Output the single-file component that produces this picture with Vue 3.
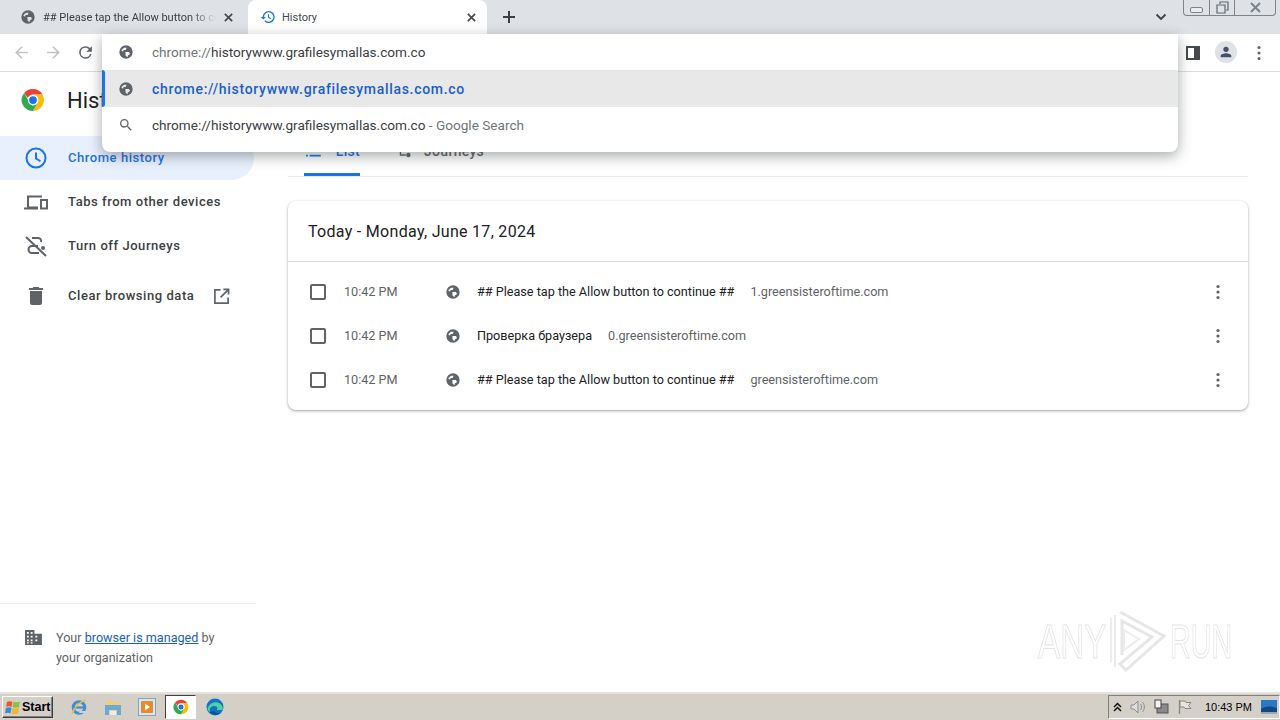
<template>
  <div class="screen">
    <div class="browser">
      <!-- tab strip -->
      <div class="tabstrip">
        <div class="tab">
          <svg class="tab-icon" viewBox="0 0 24 24"><path fill="#5f6368" fill-rule="evenodd" :d="globe" /></svg>
          <span class="tab-title fade">## Please tap the Allow button to continue ##</span>
          <svg class="tab-close" viewBox="0 0 12 12"><path d="M2 2l8 8M10 2l-8 8" stroke="#45484c" stroke-width="1.8" fill="none" /></svg>
        </div>
        <div class="tab tab-active">
          <svg class="tab-icon" viewBox="0 0 24 24"><path fill="#1a73e8" d="M13 3a9 9 0 0 0-9 9H1l3.900 3.900L9 12H6a7 7 0 1 1 2.050 4.950L6.640 18.360A9 9 0 1 0 13 3zm-1 5v5l4.250 2.520.770-1.280-3.520-2.090V8z" /></svg>
          <span class="tab-title">History</span>
          <svg class="tab-close" viewBox="0 0 12 12"><path d="M2 2l8 8M10 2l-8 8" stroke="#45484c" stroke-width="1.8" fill="none" /></svg>
        </div>
        <svg class="new-tab" viewBox="0 0 14 14"><path d="M7 1v12M1 7h12" stroke="#3c4043" stroke-width="2" fill="none" /></svg>
        <svg class="tab-search" viewBox="0 0 12 8"><path d="M1.500 1.500L6 6l4.500-4.500" stroke="#3c4043" stroke-width="1.8" fill="none" /></svg>
        <div class="window-controls">
          <div class="wc wc-min"><span></span></div>
          <div class="wc wc-max">
            <svg viewBox="0 0 13 13" width="13" height="13"><path d="M4 3V1h8v8h-2M1 4h8v8H1z" fill="none" stroke="#5c6670" stroke-width="1.2" /></svg>
          </div>
          <div class="wc wc-close">
            <svg viewBox="0 0 13 11" width="13" height="11"><path d="M2 1l9 9M11 1l-9 9" fill="none" stroke="#7a838c" stroke-width="2" /></svg>
          </div>
        </div>
      </div>

      <!-- toolbar -->
      <div class="toolbar">
        <svg class="tb-icon" viewBox="0 0 24 24"><path fill="#bfc2c6" d="M20 11H7.830l5.590-5.590L12 4l-8 8 8 8 1.410-1.410L7.830 13H20z" /></svg>
        <svg class="tb-icon" viewBox="0 0 24 24"><path fill="#bfc2c6" d="M4 11h12.170l-5.590-5.590L12 4l8 8-8 8-1.410-1.410L16.170 13H4z" /></svg>
        <svg class="tb-icon" viewBox="0 0 24 24"><path fill="#5f6368" d="M17.650 6.350A7.960 7.960 0 0 0 12 4a8 8 0 1 0 7.730 10h-2.080A6 6 0 1 1 12 6c1.660 0 3.140.690 4.220 1.780L13 11h7V4z" /></svg>
        <div class="tb-spacer"></div>
        <svg class="side-panel" viewBox="0 0 14 14"><path fill="#45484c" fill-rule="evenodd" d="M0 0h14v14H0zM2 2v10h6V2z" /></svg>
        <div class="avatar">
          <svg viewBox="0 0 24 24" width="16" height="16"><path fill="#45506b" d="M12 12a4 4 0 1 0 0-8 4 4 0 0 0 0 8zm0 2c-3 0-8 1.400-8 4v2h16v-2c0-2.600-5-4-8-4z" /></svg>
        </div>
        <svg class="dots" viewBox="0 0 4 16"><circle cx="2" cy="2.500" r="1.500" /><circle cx="2" cy="8" r="1.500" /><circle cx="2" cy="13.500" r="1.500" /></svg>
      </div>

      <!-- history page -->
      <div class="page">
        <aside class="sidebar">
          <div class="brand">
            <svg width="24" height="24" viewBox="0 0 48 48">
              <path fill="#ea4335" d="M24 2a22 22 0 0 1 19.050 11H24a11 11 0 0 0-10.300 7.100L6.300 9.900A22 22 0 0 1 24 2z" />
              <path fill="#fbbc04" d="M43.050 13A22 22 0 0 1 24 46l9.500-16.500A11 11 0 0 0 33.500 18.500 11 11 0 0 0 24 13z" />
              <path fill="#34a853" d="M6.300 9.900l9.500 16.600A10 10 0 0 0 24 35a11 11 0 0 0 9.500-5.500L24 46A22 22 0 0 1 6.300 9.900z" />
              <circle cx="24" cy="24" r="9" fill="#1a73e8" stroke="#fff" stroke-width="2.500" />
            </svg>
            <span class="brand-title">History</span>
          </div>
          <nav class="nav">
            <div class="nav-item active">
              <svg class="nav-icon" viewBox="0 0 24 24"><path fill="#1a73e8" d="M12 1.500a10.500 10.500 0 1 0 0 21 10.500 10.500 0 0 0 0-21zm0 2a8.500 8.500 0 1 1 0 17 8.500 8.500 0 0 1 0-17zM11 6.500V13l5 3 1-1.600-4-2.400V6.500z" /></svg>
              <span>Chrome history</span>
            </div>
            <div class="nav-item">
              <svg class="nav-icon wide" viewBox="0 0 24 16"><path fill="#5f6368" d="M3 1.500h15v2H5v9h9v3H0v-2h3zM16 5h8v10.500h-8zm2 2v6.500h4V7z" /></svg>
              <span>Tabs from other devices</span>
            </div>
            <div class="nav-item">
              <svg class="nav-icon" viewBox="0 0 24 24"><path d="M2 3l20 19" stroke="#5f6368" stroke-width="2" fill="none" /><path d="M8 4h6a3 3 0 0 1 3 4M14 12H8a3.500 3.500 0 0 0 0 7h7" stroke="#5f6368" stroke-width="2" fill="none" /><circle cx="19" cy="14" r="2" fill="#5f6368" /></svg>
              <span>Turn off Journeys</span>
            </div>
            <div class="nav-item clear">
              <svg class="nav-icon" viewBox="0 0 24 24"><path fill="#5f6368" d="M6 19a2 2 0 0 0 2 2h8a2 2 0 0 0 2-2V7H6zM19 4h-3.500l-1-1h-5l-1 1H5v2h14z" /></svg>
              <span>Clear browsing data</span>
              <svg class="ext" viewBox="0 0 18 18"><path d="M8 2H2v14h14v-6M11 1.500h5.500V7M16 2L8 10" fill="none" stroke="#5f6368" stroke-width="1.800" /></svg>
            </div>
          </nav>
          <div class="managed">
            <svg class="managed-icon" viewBox="0 0 18 16"><path fill="#5f6368" fill-rule="evenodd" d="M0 0h10v4h8v12H0zm2 2v2h2V2zm4 0v2h2V2zM2 6v2h2V6zm4 0v2h2V6zM2 10v2h2v-2zm4 0v2h2v-2zm5-4v2h2V6zm0 4v2h2v-2zM2 13v1.500h2V13zm4 0v1.500h2V13z" /></svg>
            <p>Your <a>browser is managed</a> by your organization</p>
          </div>
        </aside>

        <main class="content">
          <div class="content-tabs">
            <div class="ctab ctab-active">
              <svg width="16" height="12" viewBox="0 0 16 12"><path d="M0 1h2M4 1h12M0 6h2M4 6h12M0 11h2M4 11h12" stroke="#1a73e8" stroke-width="1.800" /></svg>
              <span>List</span>
            </div>
            <div class="ctab">
              <svg width="14" height="13" viewBox="0 0 16 14"><circle cx="4" cy="4" r="3" fill="#5f6368" /><circle cx="13" cy="11" r="2.500" fill="#5f6368" /><path d="M4 7v4h6" stroke="#5f6368" stroke-width="1.600" fill="none" /></svg>
              <span>Journeys</span>
            </div>
          </div>
          <section class="card">
            <h2 class="card-title">Today - Monday, June 17, 2024</h2>
            <div class="rows">
              <div v-for="row in rows" :key="row.domain" class="row">
                <span class="check"></span>
                <span class="time">10:42 PM</span>
                <svg class="row-globe" viewBox="0 0 24 24"><path fill="#5f6368" fill-rule="evenodd" :d="globe" /></svg>
                <span class="row-title">{{ row.title }}</span>
                <span class="row-domain">{{ row.domain }}</span>
                <svg class="row-more" viewBox="0 0 4 16"><circle cx="2" cy="2.500" r="1.600" /><circle cx="2" cy="8" r="1.600" /><circle cx="2" cy="13.500" r="1.600" /></svg>
              </div>
            </div>
          </section>
          <div class="watermark">
            <span class="wm-any">ANY</span>
            <svg width="58" height="62" viewBox="0 0 58 62"><path d="M12 2l44 24-38 34-6-6 32-27L14 11v34" fill="none" stroke="#e6e6e6" stroke-width="3" /><path d="M3 8v44M7 5v52M16 20l15 9-15 11z" fill="none" stroke="#ececec" stroke-width="2" /></svg>
            <span class="wm-run">RUN</span>
          </div>
        </main>
      </div>

      <!-- omnibox dropdown -->
      <div class="omnibox">
        <div class="omni-row">
          <svg class="omni-icon" viewBox="0 0 24 24"><path fill="#5f6368" fill-rule="evenodd" :d="globe" /></svg>
          <span class="omni-text"><span class="dim">chrome://</span>historywww.grafilesymallas.com.co</span>
        </div>
        <div class="omni-row selected">
          <svg class="omni-icon" viewBox="0 0 24 24"><path fill="#5f6368" fill-rule="evenodd" :d="globe" /></svg>
          <span class="omni-text link">chrome://historywww.grafilesymallas.com.co</span>
        </div>
        <div class="omni-row last">
          <svg class="omni-icon" viewBox="0 0 24 24"><path fill="#5f6368" d="M15.500 14h-.790l-.280-.270A6.470 6.470 0 0 0 16 9.500 6.500 6.500 0 1 0 9.500 16c1.610 0 3.090-.590 4.230-1.570l.270.280v.790l5 4.990L20.490 19zm-6 0a4.500 4.500 0 1 1 0-9 4.500 4.500 0 0 1 0 9z" /></svg>
          <span class="omni-text">chrome://historywww.grafilesymallas.com.co <span class="dim">- Google Search</span></span>
        </div>
      </div>
    </div>

    <!-- windows taskbar -->
    <footer class="taskbar">
      <div class="start">
        <svg width="16" height="15" viewBox="0 0 16 15">
          <path fill="#e8562a" d="M2 2c2-1 4-1 5.500 0l-1 5C5 6 3 6 1 7z" />
          <path fill="#8cc04a" d="M8.500 1.500c2 1 4 1 6.500 0l-1 5.500c-2 1-4 1-6.500 0z" />
          <path fill="#3b88d8" d="M1 8c2-1 4-1 5.500 0l-1 5.500C4 12.500 2 12.500 0 13.500z" />
          <path fill="#f4b62c" d="M7.500 8c2 1 4 1 6.500 0l-1 5.500c-2 1-4 1-6.500 0z" />
        </svg>
        <span>Start</span>
      </div>
      <div class="task-icon">
        <svg width="18" height="18" viewBox="0 0 18 18"><circle cx="9" cy="9.500" r="5.800" fill="none" stroke="#3f8fd6" stroke-width="3" /><path d="M3 9.500h12" stroke="#3f8fd6" stroke-width="2.200" /><path d="M10 13h5.500v2H9z" fill="#d4d0c8" /><path d="M2 16c2-6 7-12 14-14" fill="none" stroke="#e9c04a" stroke-width="1.400" /></svg>
      </div>
      <div class="task-icon">
        <svg width="18" height="16" viewBox="0 0 18 16"><path fill="#e9cf7e" d="M2 1h6l1 2h7v4H2z" /><path fill="#6fa9d0" d="M1 6h16v10h-4v-5H5v5H1z" /><path fill="#fff" d="M6 12h6v4H6z" opacity=".6" /></svg>
      </div>
      <div class="task-icon">
        <svg width="18" height="18" viewBox="0 0 18 18"><rect x=".5" y=".5" width="17" height="17" fill="#d7e6f2" stroke="#7fa6c6" /><rect x="3" y="3" width="12" height="12" rx="1" fill="#ec8a22" /><path d="M7 5.500l5 3.500-5 3.500z" fill="#fff" /></svg>
      </div>
      <div class="task-icon pressed">
        <svg width="16" height="16" viewBox="0 0 48 48">
          <path fill="#ea4335" d="M24 2a22 22 0 0 1 19.050 11H24a11 11 0 0 0-10.300 7.100L6.300 9.900A22 22 0 0 1 24 2z" />
          <path fill="#fbbc04" d="M43.050 13A22 22 0 0 1 24 46l9.500-16.500A11 11 0 0 0 33.500 18.500 11 11 0 0 0 24 13z" />
          <path fill="#34a853" d="M6.300 9.900l9.500 16.600A10 10 0 0 0 24 35a11 11 0 0 0 9.500-5.500L24 46A22 22 0 0 1 6.300 9.900z" />
          <circle cx="24" cy="24" r="9" fill="#1a73e8" stroke="#fff" stroke-width="2.500" />
        </svg>
      </div>
      <div class="task-icon">
        <svg width="18" height="18" viewBox="0 0 18 18"><circle cx="9" cy="9" r="8.500" fill="#1273c4" /><path d="M1.500 11C3 5 9 3 13 5c3 1.500 4.500 4.500 3.500 7h-6c2-1 1-4-2-4C5 8 3 10 4 14c-1.300-.6-2-1.700-2.500-3z" fill="#4fd1a5" /><path d="M4 14c2 3 7 4 11 1-3 .5-6 0-7-2z" fill="#0d4f8f" /></svg>
      </div>
      <div class="task-spacer"></div>
      <div class="tray">
        <svg width="9" height="10" viewBox="0 0 9 10"><path d="M1 5l3.500-3.500L8 5M1 9l3.500-3.500L8 9" fill="none" stroke="#111" stroke-width="1.500" /></svg>
        <svg class="tray-speaker" width="16" height="16" viewBox="0 0 16 16"><path d="M1 6h3l4-4v12l-4-4H1z" fill="#dcdcdc" stroke="#8d8d8d" /><path d="M10.500 5c1.500 2 1.500 4 0 6M12.500 3c2.500 3 2.500 7 0 10" fill="none" stroke="#8d8d8d" /></svg>
        <svg class="tray-gap" width="16" height="16" viewBox="0 0 16 16"><rect x="3" y="5" width="11" height="9" fill="#8a8a8a" stroke="#555" /><rect x="1" y="1" width="6" height="8" fill="#f2f2f2" stroke="#444" /></svg>
        <svg class="tray-gap flag" width="16" height="16" viewBox="0 0 16 16"><path d="M2.500 1v14" stroke="#888" stroke-width="1.400" /><path d="M3 2h5l1 1.500h5l-2.500 3 2.500 3H8L7 8H3z" fill="#e6e3da" stroke="#888" /></svg>
        <span class="clock">10:43 PM</span>
        <svg class="desktop" width="16" height="14" viewBox="0 0 16 14"><rect width="16" height="14" fill="#2878c4" /><path d="M0 9c5-3 10-3 16-1v6H0z" fill="#14487e" /><rect y="12" width="16" height="2" fill="#9aa7b2" /></svg>
      </div>
    </footer>
  </div>
</template>

<script setup>
// globe favicon shared by tabs, rows and the omnibox
const globe = 'M12 2a10 10 0 1 0 0 20 10 10 0 0 0 0-20zM4.800 9.500L9 5.500h4l-1.500 3.500H8.500l-1 2.500zM11 12h5.500l1.500 3-3.500 2.500V20l-3-2.500z'

const rows = [
  { title: '## Please tap the Allow button to continue ##', domain: '1.greensisteroftime.com' },
  { title: 'Проверка браузера', domain: '0.greensisteroftime.com' },
  { title: '## Please tap the Allow button to continue ##', domain: 'greensisteroftime.com' }
]
</script>

<style>
html, body { margin: 0; background: #fff; overflow: hidden; }
</style>

<style scoped>
.screen { width: 1280px; height: 720px; display: flex; flex-direction: column; font-family: Roboto, "Liberation Sans", sans-serif; color: #202124; overflow: hidden; }
.browser { flex: 1; min-height: 0; display: flex; flex-direction: column; position: relative; }

.tabstrip { height: 34px; flex: none; background: #dee1e6; display: flex; align-items: center; padding-left: 12px; position: relative; }
.tab { width: 232px; height: 34px; box-sizing: border-box; display: flex; align-items: center; padding: 0 8px; font-size: 11px; color: #3c4043; }
.tab-active { width: 239px; background: #fff; border-radius: 8px 8px 0 0; color: #45484c; padding-left: 12px; margin-left: 4px; }
.tab-icon { width: 16px; height: 16px; flex: none; margin-right: 6px; }
.tab-title { flex: 1; overflow: hidden; white-space: nowrap; }
.fade { margin-left: 1px; -webkit-mask-image: linear-gradient(90deg, #000 85%, transparent); mask-image: linear-gradient(90deg, #000 85%, transparent); }
.tab-close { width: 11px; height: 11px; flex: none; margin: 0 2px 0 7px; }
.new-tab { width: 14px; height: 14px; margin-left: 15px; }
.tab-search { width: 12px; height: 8px; position: absolute; right: 113px; top: 13px; }
.window-controls { position: absolute; top: 0; right: 4px; width: 93px; height: 16px; box-sizing: border-box; display: flex; border: 1px solid #7d858c; border-top: none; border-radius: 0 0 4px 4px; }
.wc { display: flex; align-items: center; justify-content: center; }
.wc-min { width: 25px; }
.wc-min span { width: 11px; height: 4px; border: 1px solid #7d858c; border-radius: 2px; background: #e9ecef; margin-top: 4px; }
.wc-max { width: 24px; border-left: 1px solid #7d858c; border-right: 1px solid #7d858c; }
.wc-close { flex: 1; }

.toolbar { height: 38px; flex: none; box-sizing: border-box; background: #fff; border-bottom: 1px solid #dadce0; display: flex; align-items: center; padding: 0 13px 0 12px; }
.tb-icon { width: 19px; height: 19px; margin-right: 13px; }
.tb-spacer { flex: 1; }
.side-panel { width: 14px; height: 14px; margin-right: 15px; }
.avatar { width: 22px; height: 22px; border-radius: 50%; background: #dee1e6; display: flex; align-items: center; justify-content: center; margin-right: 20px; margin-bottom: 1px; }
.dots { width: 4px; height: 16px; fill: #5f6368; margin-right: 6px; }

.page { flex: 1; min-height: 0; display: flex; }
.sidebar { width: 256px; flex: none; display: flex; flex-direction: column; }
.brand { height: 64px; flex: none; box-sizing: border-box; padding: 0 0 8px 21px; display: flex; align-items: center; gap: 22px; }
.brand-title { font-size: 22px; color: #202124; }
.nav { flex: 1; }
.nav-item { width: 254px; height: 44px; box-sizing: border-box; display: flex; align-items: center; padding-left: 24px; font-size: 13px; font-weight: 500; letter-spacing: .55px; color: #3c4043; border-radius: 0 22px 22px 0; }
.nav-item span { margin-bottom: 2px; }
.nav-item.active { background: #e8f0fe; color: #1a73e8; }
.nav-item.clear { margin-top: 6px; }
.nav-icon { width: 24px; height: 24px; flex: none; margin-right: 20px; }
.nav-icon.wide { height: 16px; }
.ext { width: 17px; height: 17px; margin-left: 19px; }
.managed { height: 89px; flex: none; box-sizing: border-box; border-top: 1px solid #eceded; display: flex; padding: 24px 36px 0 25px; font-size: 12.600px; line-height: 20px; color: #5f6368; }
.managed-icon { width: 17px; height: 15px; flex: none; margin: 2px 14px 0 0; }
.managed p { margin: 0; }
.managed a { color: #1a5fb4; text-decoration: underline; }

.content { flex: 1; min-width: 0; padding: 0 32px; position: relative; }
.content-tabs { height: 105px; box-sizing: border-box; border-bottom: 1px solid #e8eaed; display: flex; align-items: flex-end; padding-left: 16px; margin-bottom: 24px; }
.ctab { height: 46px; box-sizing: border-box; display: flex; align-items: center; gap: 13px; font-size: 14px; font-weight: 500; letter-spacing: .3px; color: #5f6368; margin-right: 37px; padding-bottom: 4px; }
.ctab-active { width: 56px; gap: 15px; color: #1a73e8; border-bottom: 3px solid #1a73e8; padding: 0 0 1px 2px; border-radius: 2px 2px 0 0; }

.card { background: #fff; border-radius: 8px; box-shadow: 0 1px 2px rgba(60, 64, 67, .3), 0 1px 3px 1px rgba(60, 64, 67, .15); }
.card-title { margin: 0; height: 61px; box-sizing: border-box; line-height: 62px; padding-left: 20px; font-size: 16px; font-weight: 400; letter-spacing: .3px; border-bottom: 1px solid #dadce0; color: #202124; }
.rows { padding: 8px 0; }
.row { height: 44px; display: flex; align-items: center; padding: 0 28px 0 22px; font-size: 12.650px; }
.check { width: 12px; height: 12px; border: 2px solid #5f6368; border-radius: 2px; flex: none; margin-right: 18px; }
.time { width: 101px; flex: none; color: #5f6368; margin-bottom: 2px; }
.row-globe { width: 16px; height: 16px; flex: none; margin-right: 16px; }
.row-title { color: #202124; margin: 0 16px 2px 0; white-space: nowrap; }
.row-domain { flex: 1; color: #5f6368; white-space: nowrap; margin-bottom: 2px; }
.row-more { width: 4px; height: 16px; fill: #5f6368; flex: none; }

.watermark { position: absolute; left: 782px; top: 538px; display: flex; align-items: center; font-family: "Liberation Sans", sans-serif; font-size: 49px; line-height: 62px; color: #fff; -webkit-text-stroke: 1px #e4e4e4; }
.wm-any { width: 70px; margin-right: 0; white-space: nowrap; transform: scaleX(.68); transform-origin: left center; }
.wm-run { width: 62px; margin-left: 4px; white-space: nowrap; transform: scaleX(.585); transform-origin: left center; }

.omnibox { position: absolute; left: 102px; top: 34px; width: 1076px; height: 118px; background: #fff; border-radius: 0 0 8px 8px; box-shadow: 0 4px 14px rgba(60, 64, 67, .45); overflow: hidden; display: flex; flex-direction: column; }
.omni-row { height: 36px; flex: none; display: flex; align-items: center; padding-left: 16px; font-size: 13.600px; color: #3c4043; position: relative; }
.omni-row.selected { height: 37px; background: #e8e8e9; }
.omni-row.selected::before { content: ""; position: absolute; left: 0; top: 0; bottom: 0; width: 3px; background: #1a73e8; border-radius: 0 3px 3px 0; }
.omni-row.last { height: 45px; padding-bottom: 9px; box-sizing: border-box; }
.omni-icon { width: 16px; height: 16px; flex: none; margin-right: 18px; }
.omni-text { white-space: nowrap; }
.dim { color: #70757a; }
.link { color: #1a5fc8; font-weight: 500; font-size: 14px; letter-spacing: .7px; }

.taskbar { height: 28px; flex: none; box-sizing: border-box; background: #d4d0c8; border-top: 2px solid #e6e3dc; display: flex; align-items: center; padding: 0 0 0 2px; }
.start { width: 51px; height: 22px; box-sizing: border-box; display: flex; align-items: center; gap: 1px; padding-left: 2px; background: #d4d0c8; border: 1px solid; border-color: #fff #404040 #404040 #fff; box-shadow: inset -1px -1px 0 #808080; font-family: "Liberation Sans", sans-serif; font-size: 12.500px; font-weight: 700; color: #000; }
.task-icon { width: 34px; height: 24px; box-sizing: border-box; display: flex; align-items: center; justify-content: center; }
.task-icon:nth-child(2) { margin-left: 9px; }
.task-icon.pressed { width: 31px; margin: 0 2px 0 1px; background: #fff; border: 1px solid; border-color: #404040 #fff #fff #404040; }
.task-spacer { flex: 1; }
.tray { height: 24px; box-sizing: border-box; display: flex; align-items: center; padding: 0 2px 0 4px; border: 1px solid; border-color: #808080 #fff #fff #808080; }
.tray-speaker { margin-left: 8px; }
.tray-gap { margin-left: 8px; }
.tray-gap.flag { margin-left: 7px; }
.clock { font-family: "Liberation Sans", sans-serif; font-size: 11px; color: #000; margin: 0 9px 0 12px; }
</style>
